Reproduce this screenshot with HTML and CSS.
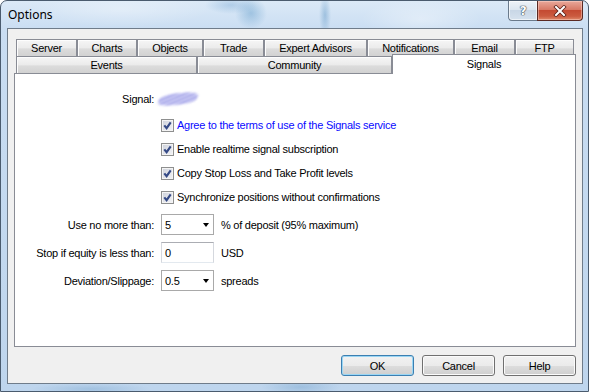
FILE: index.html
```html
<!DOCTYPE html>
<html lang="en">
<head>
    <meta charset="UTF-8">
    <meta name="viewport" content="width=device-width, initial-scale=1.0">
    <title>Options</title>
    <link rel="stylesheet" href="styles.css">
</head>
<body>
    <div class="window">
        <div class="titlebar">
            <span class="title">Options</span>
            <div class="caption-buttons">
                <div class="cap-btn cap-help">?</div>
                <div class="cap-btn cap-close">
                    <svg width="14" height="12" viewBox="0 0 14 12">
                        <path d="M3 2 L11 10 M11 2 L3 10" stroke="#5a1f17" stroke-width="3.6" stroke-linecap="square"/>
                        <path d="M3 2 L11 10 M11 2 L3 10" stroke="#ffffff" stroke-width="2" stroke-linecap="square"/>
                    </svg>
                </div>
            </div>
        </div>

        <div class="client">
            <div class="tabs">
                <div class="tab-row">
                    <div class="tab t-server">Server</div>
                    <div class="tab t-charts">Charts</div>
                    <div class="tab t-objects">Objects</div>
                    <div class="tab t-trade">Trade</div>
                    <div class="tab t-experts">Expert Advisors</div>
                    <div class="tab t-notify">Notifications</div>
                    <div class="tab t-email">Email</div>
                    <div class="tab t-ftp">FTP</div>
                </div>
                <div class="tab-row">
                    <div class="tab t-events">Events</div>
                    <div class="tab t-community">Community</div>
                    <div class="tab active">Signals</div>
                </div>
            </div>

            <div class="panel">
                <div class="field-row signal-row">
                    <div class="label">Signal:</div>
                    <div class="signal-name"></div>
                </div>

                <div class="checks">
                    <div class="check-row">
                        <span class="checkbox"></span>
                        <span class="link-text">Agree to the terms of use of the Signals service</span>
                    </div>
                    <div class="check-row">
                        <span class="checkbox"></span>
                        <span>Enable realtime signal subscription</span>
                    </div>
                    <div class="check-row">
                        <span class="checkbox"></span>
                        <span>Copy Stop Loss and Take Profit levels</span>
                    </div>
                    <div class="check-row">
                        <span class="checkbox"></span>
                        <span>Synchronize positions without confirmations</span>
                    </div>
                </div>

                <div class="form">
                    <div class="field-row">
                        <div class="label">Use no more than:</div>
                        <div class="combo"><span>5</span><span class="arrow"></span></div>
                        <span class="unit">% of deposit (95% maximum)</span>
                    </div>
                    <div class="field-row">
                        <div class="label">Stop if equity is less than:</div>
                        <div class="textbox">0</div>
                        <span class="unit">USD</span>
                    </div>
                    <div class="field-row">
                        <div class="label">Deviation/Slippage:</div>
                        <div class="combo"><span>0.5</span><span class="arrow"></span></div>
                        <span class="unit">spreads</span>
                    </div>
                </div>
            </div>

            <div class="buttons">
                <button class="btn default">OK</button>
                <button class="btn">Cancel</button>
                <button class="btn">Help</button>
            </div>
        </div>
    </div>
</body>
</html>
```

FILE: styles.css
```css
body {
    margin: 0;
    font-family: "Liberation Sans", Arial, sans-serif;
    font-size: 11px;
    letter-spacing: -0.25px;
    color: #000;
    background: #fff;
}

.window {
    width: 589px;
    height: 392px;
    box-sizing: border-box;
    border: 1px solid #4a5b6e;
    border-radius: 7px 7px 0 0;
    padding: 0 5px 7px 6px;
    display: flex;
    flex-direction: column;
    overflow: hidden;
    background:
        radial-gradient(ellipse 40px 8px at 300px 386px, rgba(120, 165, 205, 0.45), transparent),
        radial-gradient(ellipse 60px 6px at 90px 388px, rgba(120, 165, 205, 0.4), transparent),
        linear-gradient(to bottom, #dbe9f7, #c9ddf2 30px, #bed5ed);
}

/* title bar with the glass streaks behind it */
.titlebar {
    height: 27px;
    margin: 0 -5px 0 -6px;
    padding: 0 5px 0 6px;
    display: flex;
    align-items: flex-start;
    background:
        radial-gradient(ellipse 16px 16px at 250px 12px, rgba(80, 145, 195, 0.4), transparent),
        radial-gradient(ellipse 26px 9px at 230px 4px, rgba(100, 155, 205, 0.35), transparent),
        radial-gradient(ellipse 6px 22px at 324px 14px, rgba(80, 140, 190, 0.4), transparent),
        radial-gradient(ellipse 60px 20px at 420px 18px, rgba(255, 255, 255, 0.35), transparent),
        radial-gradient(ellipse 90px 18px at 120px 8px, rgba(255, 255, 255, 0.3), transparent);
}

.title {
    margin: 6px 0 0 1px;
    font-family: "Noto Sans", "Open Sans", sans-serif;
    font-size: 12px;
    line-height: 16px;
    letter-spacing: 0;
    color: #000;
}

.caption-buttons {
    margin-left: auto;
    display: flex;
}

.cap-btn {
    height: 20px;
    box-sizing: border-box;
    display: flex;
    align-items: center;
    justify-content: center;
}

.cap-help {
    width: 29px;
    border: 1px solid #6a7a8c;
    border-top: none;
    border-right: none;
    border-radius: 0 0 0 4px;
    background: linear-gradient(to bottom, #eef3f8, #dce6f0 45%, #c9d7e6 50%, #d6e2ee);
    box-shadow: inset 0 0 0 1px rgba(255, 255, 255, 0.6);
    font-family: "DejaVu Sans", sans-serif;
    font-size: 12px;
    font-weight: bold;
    color: #fff;
    text-shadow: 0 0 1px #34414f, 0 0 1px #34414f, 0 0 1px #34414f;
}

.cap-close {
    width: 46px;
    border: 1px solid #5a2a24;
    border-top: none;
    border-radius: 0 0 4px 0;
    background: linear-gradient(to bottom, #e9a99b, #d87a66 45%, #c44a32 50%, #cb5b40 80%, #e08a6b);
    box-shadow: inset 0 0 0 1px rgba(255, 220, 210, 0.45);
}

.client {
    flex: 1;
    background: #f0f0f0;
    border: 1px solid #6f7c8a;
    padding: 10px 6px 0 6px;
    display: flex;
    flex-direction: column;
}

/* tab strip */
.tab-row {
    display: flex;
    height: 17px;
    margin: 0 2px;
}

.tab {
    box-sizing: border-box;
    height: 17px;
    border: 1px solid #898c95;
    border-bottom: none;
    background: linear-gradient(to bottom, #f6f6f6, #ebebeb 50%, #dcdcdc 55%, #d2d2d2);
    box-shadow: inset 1px 1px 0 #fdfdfd;
    text-align: center;
    line-height: 16px;
    white-space: nowrap;
}

.t-server { width: 61px; }
.t-charts { width: 60px; }
.t-objects { width: 66px; }
.t-trade { width: 61px; }
.t-experts { width: 103px; }
.t-notify { width: 87px; }
.t-email { width: 61px; }
.t-ftp { width: 59px; }
.t-events { width: 181px; }
.t-community { width: 195px; }

.tab.active {
    width: 184px;
    height: 20px;
    margin-top: -2px;
    margin-right: -2px;
    background: #fff;
    box-shadow: none;
    line-height: 18px;
    position: relative;
    z-index: 1;
}

.panel {
    height: 274px;
    box-sizing: border-box;
    border: 1px solid #898c95;
    background: #fff;
    padding-top: 15px;
}

.field-row {
    display: flex;
    align-items: center;
    height: 21px;
}

.label {
    width: 139px;
    margin-right: 7px;
    text-align: right;
    white-space: nowrap;
}

.signal-row {
    height: 20px;
}

.signal-name {
    width: 38px;
    height: 12px;
    margin-left: -2px;
    background: repeating-linear-gradient(160deg, #c7c7f4 0px, #9a9ae6 2px, #d8d8f8 4px);
    border-radius: 40%;
    transform: skewX(-20deg) rotate(-6deg);
    filter: blur(1.2px);
    opacity: 0.9;
}

.checks {
    margin-top: 4px;
}

.check-row {
    display: flex;
    align-items: center;
    height: 24px;
    padding-left: 146px;
}

.checkbox {
    width: 13px;
    height: 13px;
    box-sizing: border-box;
    margin-right: 3px;
    border: 1px solid #8e8f8f;
    background:
        url("data:image/svg+xml,%3Csvg xmlns='http://www.w3.org/2000/svg' width='11' height='11'%3E%3Cpath d='M2.3 5.3 L4.6 8.2 L8.7 2.3' fill='none' stroke='%23354a86' stroke-width='2.1'/%3E%3C/svg%3E") center / 11px 11px no-repeat,
        linear-gradient(135deg, #cdd1db, #f4f4f6);
    box-shadow: inset 0 0 0 1px #f4f4f4;
}

.link-text {
    color: #0a0aff;
}

.form {
    margin-top: 5px;
    display: flex;
    flex-direction: column;
    gap: 7px;
}

.combo,
.textbox {
    width: 53px;
    height: 21px;
    box-sizing: border-box;
    border: 1px solid #a9a9a9;
    background: #fff;
    display: flex;
    align-items: center;
    padding: 0 4px 0 3px;
}

.combo {
    justify-content: space-between;
}

.textbox {
    border-color: #abadb3 #d5d8de #e3e9ef #d5d8de;
}

.arrow {
    width: 0;
    height: 0;
    border-left: 3.5px solid transparent;
    border-right: 3.5px solid transparent;
    border-top: 4px solid #000;
}

.unit {
    margin-left: 7px;
    white-space: nowrap;
}

.buttons {
    margin-top: 8px;
    display: flex;
    justify-content: flex-end;
    gap: 8px;
}

.btn {
    width: 73px;
    height: 21px;
    box-sizing: border-box;
    border: 1px solid #707070;
    border-radius: 3px;
    background: linear-gradient(to bottom, #f2f2f2, #ebebeb 50%, #dddddd 52%, #cfcfcf);
    box-shadow: inset 0 0 0 1px #fbfbfb;
    font-family: "Liberation Sans", Arial, sans-serif;
    font-size: 11px;
    letter-spacing: -0.25px;
    color: #000;
    padding: 0;
}

.btn.default {
    border-color: #3c7fb1;
    box-shadow: inset 0 0 0 1px #9ad6f4;
}
```
